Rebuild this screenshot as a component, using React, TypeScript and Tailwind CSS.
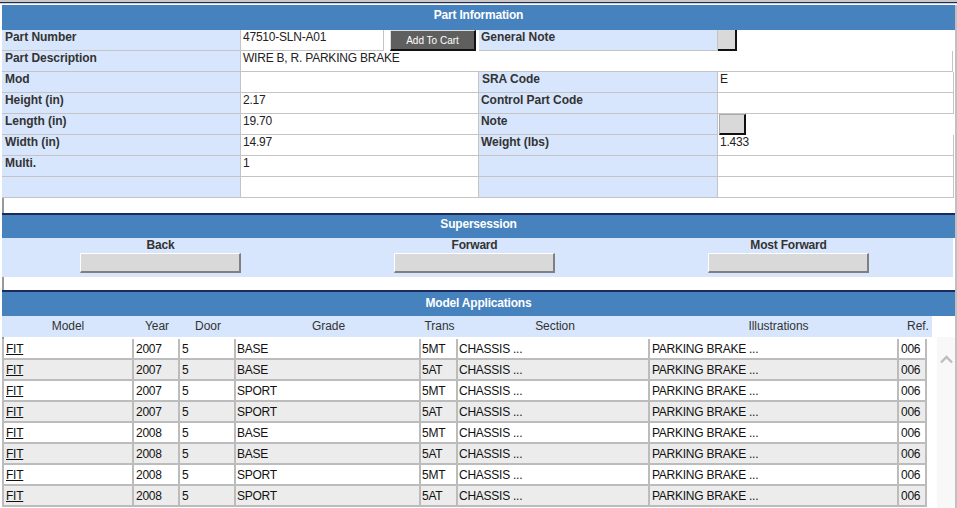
const rows: [string, string, string, string][] = [
  ["2007", "BASE", "5MT", "w"],
  ["2007", "BASE", "5AT", "g"],
  ["2007", "SPORT", "5MT", "w"],
  ["2007", "SPORT", "5AT", "g"],
  ["2008", "BASE", "5MT", "w"],
  ["2008", "BASE", "5AT", "g"],
  ["2008", "SPORT", "5MT", "w"],
  ["2008", "SPORT", "5AT", "g"],
];

function Label({ text, w, pad = "pl-[3px]" }: { text?: string; w: string; pad?: string }) {
  return (
    <div className={`${w} ${pad} h-[21px] shrink-0 bg-[#d7e6fc] border-r border-b border-[#c4c4c4] font-bold text-[#333] leading-[14px] tracking-[-0.05px]`}>
      {text}
    </div>
  );
}

function Value({ text, w }: { text?: string; w: string }) {
  return (
    <div className={`${w} h-[21px] shrink-0 bg-white border-r border-b border-[#c4c4c4] pl-[2px] text-[#222] leading-[14px] whitespace-nowrap tracking-[-0.22px]`}>
      {text}
    </div>
  );
}

function InfoRow({ a, b, c, d, pad = "pl-[2px]" }: { a?: string; b?: string; c?: string; d?: string; pad?: string }) {
  return (
    <div className="flex">
      <Label text={a} w="w-[239px]" />
      <Value text={b} w="w-[238px]" />
      <Label text={c} w="w-[239px]" pad={pad} />
      <Value text={d} w="w-[236px]" />
    </div>
  );
}

function NavCol({ title }: { title: string }) {
  return (
    <div className="w-[161px] flex flex-col items-center">
      <div className="font-bold text-[#333] leading-[15px] h-[15px] tracking-[-0.2px]">{title}</div>
      <div className="w-[161px] h-[20px] bg-[#d9d9d9] border-t border-l border-white border-r-2 border-b-2 border-r-[#808080] border-b-[#808080]" />
    </div>
  );
}

const cell = "h-[21px] shrink-0 border-r-2 border-b-2 border-[#bcbcbc] leading-[21px] text-[#111] whitespace-nowrap tracking-[-0.25px]";

export default function App() {
  return (
    <div className="relative w-[957px] h-[508px] overflow-hidden bg-white text-[12px]" style={{ fontFamily: '"Liberation Sans", Arial, sans-serif' }}>
      <div className="h-[2px] bg-[#c8c8c8]" />
      <div className="h-[1px] bg-[#1c2a5e]" />
      <div className="h-[1px] bg-[#d0d0d0]" />
      <div className="h-[1px] bg-white" />
      <div className="ml-[2px]">
        <div className="h-[25px] bg-[#4682bd] flex items-center justify-center text-white font-bold mr-[2px] pb-[6px] tracking-[-0.2px]">Part Information</div>

        <div className="flex">
          <Label text="Part Number" w="w-[239px]" />
          <div className="w-[143px] h-[21px] shrink-0 border-r border-b border-[#c4c4c4] pl-[2px] leading-[14px] text-[#222] tracking-[-0.22px]">47510-SLN-A01</div>
          <div className="w-[6px] shrink-0" />
          <div className="w-[86px] h-[21px] shrink-0 bg-[#5f5f5f] border-r-2 border-b-2 border-[#111] border-t border-l border-t-[#ddd] border-l-[#ddd] pt-[1px] text-[10px] text-white flex items-center justify-center">Add To Cart</div>
          <div className="w-[3px] shrink-0" />
          <Label text="General Note" w="w-[239px]" pad="pl-[2px]" />
          <div className="w-[19px] h-[21px] shrink-0 bg-[#d9d9d9] border-r-2 border-b-2 border-[#111]" />
        </div>

        <div className="flex">
          <Label text="Part Description" w="w-[239px]" />
          <div className="w-[712px] h-[21px] shrink-0 border-r border-b border-[#c4c4c4] pl-[2px] leading-[14px] text-[#222] tracking-[-0.22px]">WIRE B, R. PARKING BRAKE</div>
        </div>

        <InfoRow a="Mod" c="SRA Code" d="E" pad="pl-[3px]" />
        <InfoRow a="Height (in)" b="2.17" c="Control Part Code" />
        <div className="flex">
          <Label text="Length (in)" w="w-[239px]" />
          <Value text="19.70" w="w-[238px]" />
          <Label text="Note" w="w-[239px]" pad="pl-[2px]" />
          <div className="w-[27px] h-[21px] ml-[1px] shrink-0 bg-[#d9d9d9] border-t border-l border-[#aaa] border-r-2 border-b-2 border-r-[#111] border-b-[#111]" />
        </div>
        <InfoRow a="Width (in)" b="14.97" c="Weight (lbs)" d="1.433" />
        <InfoRow a="Multi." b="1" />
        <InfoRow />

        <div className="h-[15px] border-l-2 border-[#999]" />
        <div className="h-[25px] border-t-2 border-[#1c2a5e] bg-[#4682bd] flex items-center justify-center text-white font-bold mr-[2px] pb-[5px] tracking-[-0.2px]">Supersession</div>
        <div className="h-[39px] bg-[#d7e6fc] flex pl-[78px] gap-[153px] mr-[4px]">
          <NavCol title="Back" />
          <NavCol title="Forward" />
          <NavCol title="Most Forward" />
        </div>
        <div className="h-[13px] border-l-2 border-[#999]" />
        <div className="h-[26px] border-t-2 border-[#1c2a5e] bg-[#4682bd] flex items-center justify-center text-white font-bold mr-[2px] pb-[3px] tracking-[-0.2px]">Model Applications</div>

        <div className="h-[21px] w-[930px] bg-[#d7e6fc] flex items-center pb-[1px] text-[#333] tracking-[-0.05px]">
          <div className="w-[132px] text-center">Model</div>
          <div className="w-[46px] text-center">Year</div>
          <div className="w-[56px] text-center">Door</div>
          <div className="w-[185px] text-center">Grade</div>
          <div className="w-[37px] text-center">Trans</div>
          <div className="w-[194px] text-center">Section</div>
          <div className="w-[253px] text-center">Illustrations</div>
          <div className="w-[26px] text-center">Ref.</div>
        </div>
        <div className="h-[2px] w-[925px] border-l-2 border-[#999]" />

        {rows.map(([year, grade, trans, tone], i) => (
          <div key={i} className={`flex w-[925px] ${tone === "g" ? "bg-[#ececec]" : "bg-white"}`}>
            <div className={`w-[132px] border-l-2 pl-[2px] ${cell}`}><span className="underline">FIT</span></div>
            <div className={`w-[46px] pl-[2px] ${cell}`}>{year}</div>
            <div className={`w-[56px] pl-[2px] ${cell}`}>5</div>
            <div className={`w-[185px] pl-[1px] ${cell}`}>{grade}</div>
            <div className={`w-[37px] pl-[1px] ${cell}`}>{trans}</div>
            <div className={`w-[192px] pl-[1px] ${cell}`}>CHASSIS ...</div>
            <div className={`w-[249px] pl-[2px] ${cell}`}>PARKING BRAKE ...</div>
            <div className={`w-[28px] pl-[2px] ${cell}`}>006</div>
          </div>
        ))}
      </div>

      <div className="absolute left-[937px] top-[337px] w-[18px] h-[171px] bg-[#f8f8f8] flex justify-center pt-[18px]">
        <svg width="13" height="9" viewBox="0 0 13 9" fill="none">
          <path d="M1 7.5 L6.5 2 L12 7.5" stroke="#bdbdbd" strokeWidth="2.4" />
        </svg>
      </div>
      <div className="absolute right-0 top-[5px] w-[2px] h-[503px] bg-[#c0c0c0]" />
    </div>
  );
}
